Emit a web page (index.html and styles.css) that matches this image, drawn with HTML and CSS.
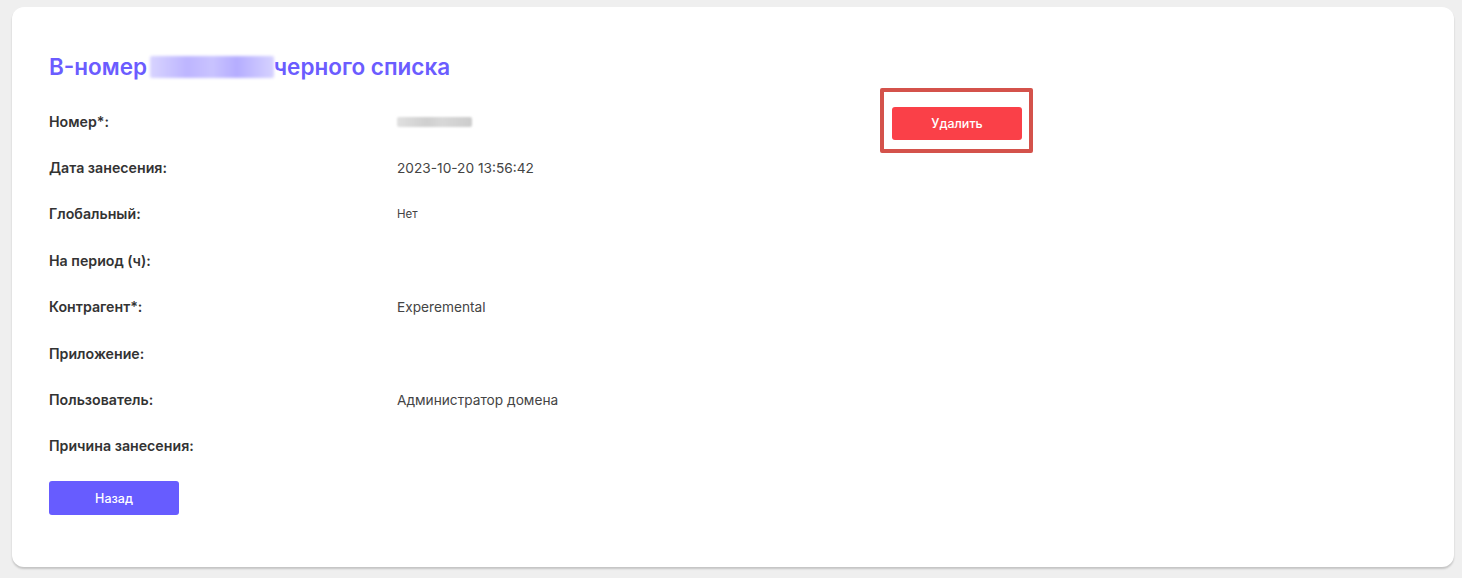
FILE: index.html
```html
<!DOCTYPE html>
<html lang="ru">
<head>
  <meta charset="UTF-8">
  <meta name="viewport" content="width=device-width, initial-scale=1.0">
  <title>B-номер черного списка</title>
  <link rel="stylesheet" href="styles.css">
</head>
<body>
  <div class="card">
    <h1 class="title">B-номер <span class="blur blur-title"></span>черного списка</h1>

    <div class="content">
      <div class="details">
        <div class="row">
          <div class="label">Номер*:</div>
          <div class="value"><span class="blur blur-number"></span></div>
        </div>
        <div class="row">
          <div class="label">Дата занесения:</div>
          <div class="value">2023-10-20 13:56:42</div>
        </div>
        <div class="row">
          <div class="label">Глобальный:</div>
          <div class="value small">Нет</div>
        </div>
        <div class="row">
          <div class="label">На период (ч):</div>
          <div class="value"></div>
        </div>
        <div class="row">
          <div class="label">Контрагент*:</div>
          <div class="value">Experemental</div>
        </div>
        <div class="row">
          <div class="label">Приложение:</div>
          <div class="value"></div>
        </div>
        <div class="row">
          <div class="label">Пользователь:</div>
          <div class="value">Администратор домена</div>
        </div>
        <div class="row">
          <div class="label">Причина занесения:</div>
          <div class="value"></div>
        </div>
      </div>

      <!-- highlighted action -->
      <div class="highlight">
        <button class="btn btn-delete">Удалить</button>
      </div>
    </div>

    <button class="btn btn-back">Назад</button>
  </div>
</body>
</html>
```

FILE: styles.css
```css
/* Global Styles */
body {
  margin: 0;
  padding: 7px 8px 11px 12px;
  background: #efefef;
  font-family: 'Inter', 'Noto Sans', sans-serif;
  color: #333;
}

.card {
  background: #fff;
  border-radius: 12px;
  height: 560px;
  box-sizing: border-box;
  padding: 45px 37px 0;
  box-shadow: 0 2px 2px rgba(0, 0, 0, 0.18);
}

/* Title */
.title {
  margin: 0;
  font-size: 22.5px;
  line-height: 30px;
  font-weight: 600;
  color: #6b5cff;
}
.blur {
  display: inline-block;
  border-radius: 2px;
  vertical-align: middle;
}
.blur-title {
  width: 124px;
  height: 22px;
  margin: -4px 0 0 -3px;
  background: linear-gradient(90deg, #d8d4ff, #bdb5ff 30%, #c9c3ff 50%, #b5adff 70%, #d6d2ff);
  filter: blur(1.5px);
}
.blur-number {
  width: 75px;
  height: 10px;
  background: linear-gradient(90deg, #e0e0e0, #cfcfcf 40%, #d8d8d8 60%, #cccccc);
  filter: blur(1px);
}

/* Details */
.content {
  display: flex;
  align-items: flex-start;
  margin-top: 16px;
}
.details {
  width: 831px;
}
.row {
  display: flex;
  align-items: center;
  height: 46.4px;
}
.label {
  width: 348px;
  font-size: 14.2px;
  font-weight: 600;
  color: #333;
}
.value {
  font-size: 13.7px;
  color: #444;
}
.value.small {
  font-size: 11.5px;
}

/* Buttons */
.btn {
  border: none;
  border-radius: 3px;
  color: #fff;
  font-family: inherit;
  font-size: 12.5px;
  font-weight: 500;
  cursor: pointer;
  width: 130px;
}
.highlight {
  margin-top: -10px;
  border: 4px solid #d4524b;
  border-radius: 2px;
  padding: 15px 7px 9px 8px;
}
.btn-delete {
  height: 33px;
  background: #fa4048;
}
.btn-back {
  margin-top: 12px;
  height: 34px;
  background: #675cff;
}
```
